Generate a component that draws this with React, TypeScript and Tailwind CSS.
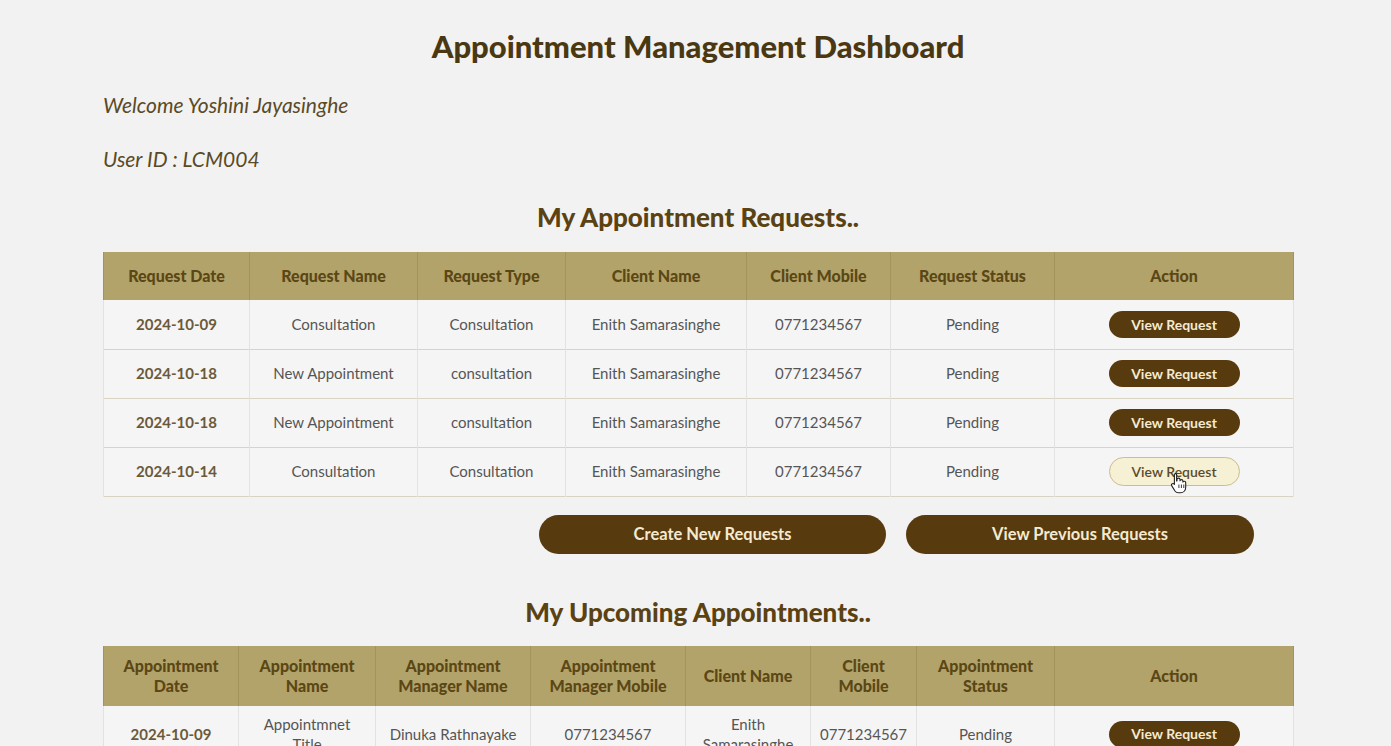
import { Fragment } from "react";

const requestRows = [
  { date: "2024-10-09", name: "Consultation", type: "Consultation" },
  { date: "2024-10-18", name: "New Appointment", type: "consultation" },
  { date: "2024-10-18", name: "New Appointment", type: "consultation" },
  { date: "2024-10-14", name: "Consultation", type: "Consultation", hover: true },
];

const requestCols = [
  { label: "Request Date", w: "w-[146px]" },
  { label: "Request Name", w: "w-[168px]" },
  { label: "Request Type", w: "w-[148px]" },
  { label: "Client Name", w: "w-[181px]" },
  { label: "Client Mobile", w: "w-[144px]" },
  { label: "Request Status", w: "w-[164px]" },
  { label: "Action", w: "w-[239px]" },
];

const apptCols = [
  { label: ["Appointment", "Date"], w: "w-[135px]" },
  { label: ["Appointment", "Name"], w: "w-[137px]" },
  { label: ["Appointment", "Manager Name"], w: "w-[155px]" },
  { label: ["Appointment", "Manager Mobile"], w: "w-[155px]" },
  { label: ["Client Name"], w: "w-[125px]" },
  { label: ["Client", "Mobile"], w: "w-[106px]" },
  { label: ["Appointment", "Status"], w: "w-[138px]" },
  { label: ["Action"], w: "w-[239px]" },
];

const HandCursor = () => (
  <svg width="18" height="22" viewBox="0 0 18 22" className="absolute left-[60px] top-[14px]">
    <path
      d="M5 1.5c1 0 1.6.7 1.6 1.6V9l.4-.1V7.6c0-.9.7-1.5 1.5-1.5s1.5.6 1.5 1.5v1.2c.2-.8.8-1.2 1.5-1.2.8 0 1.4.6 1.4 1.4v1.1c.3-.6.8-.9 1.4-.9.8 0 1.4.6 1.4 1.4v4.6c0 3.2-2.2 5.6-5.3 5.6H8.5c-1.6 0-2.6-.6-3.5-1.8L1.8 13.9c-.6-.8-.4-1.8.4-2.2.7-.4 1.5-.2 2 .4l.2.3V3.1c0-.9.7-1.6 1.6-1.6z"
      fill="#fff"
      stroke="#222"
      strokeWidth="1.1"
      strokeLinejoin="round"
    />
    <path d="M8.9 12.5v3.5M11.4 12.5v3.5M13.8 12.5v3.5" stroke="#222" strokeWidth="0.9" />
  </svg>
);

const ViewButton = ({ hover = false }: { hover?: boolean }) =>
  hover ? (
    <span className="relative inline-flex h-[29px] w-[131px] items-center justify-center rounded-full border border-[#cbbd8e] bg-[#f6f0d4] text-[14px] font-semibold text-[#5b4c2c]">
      View Request
      <HandCursor />
    </span>
  ) : (
    <span className="inline-flex h-[27px] w-[131px] items-center justify-center rounded-full bg-[#573a0e] text-[14px] font-bold text-[#f5ead0]">
      View Request
    </span>
  );

export default function App() {
  return (
    <div
      className="min-h-[746px] w-full bg-[#f2f2f2] text-[#555]"
      style={{ fontFamily: "Lato, 'Open Sans', sans-serif" }}
    >
      <div className="ml-[103px] flex w-[1190px] flex-col pt-[27px]">
        <h1 className="text-center text-[31px] font-black leading-[38px] text-[#4a3812]">
          Appointment Management Dashboard
        </h1>

        <p className="mt-[26px] text-[21px] italic leading-[28px] text-[#5b4a26]">Welcome Yoshini Jayasinghe</p>
        <p className="mt-[26px] text-[21px] italic leading-[28px] text-[#5b4a26]">User ID : LCM004</p>

        <h2 className="mt-[27px] text-center text-[26px] font-black leading-[34px] text-[#5b4212]">
          My Appointment Requests..
        </h2>

        <table className="mt-[18px] w-full table-fixed border-collapse">
          <thead>
            <tr className="h-[48px] bg-[#b2a36a]">
              {requestCols.map((c) => (
                <th
                  key={c.label}
                  className={`${c.w} border-x border-[#a3945c] text-center text-[16px] font-black text-[#5b4715]`}
                >
                  {c.label}
                </th>
              ))}
            </tr>
          </thead>
          <tbody>
            {requestRows.map((r, i) => (
              <tr key={i} className="h-[49px] border-b border-[#d9d4c2] bg-[#f5f5f5] text-center text-[15px]">
                <td className="border-x border-[#e2e2e2] font-bold text-[#6b5a3a]">{r.date}</td>
                <td className="border-x border-[#e2e2e2]">{r.name}</td>
                <td className="border-x border-[#e2e2e2]">{r.type}</td>
                <td className="border-x border-[#e2e2e2]">Enith Samarasinghe</td>
                <td className="border-x border-[#e2e2e2]">0771234567</td>
                <td className="border-x border-[#e2e2e2]">Pending</td>
                <td className="border-x border-[#e2e2e2]">
                  <ViewButton hover={r.hover} />
                </td>
              </tr>
            ))}
          </tbody>
        </table>

        <div className="mt-[18px] flex justify-end gap-[20px] pr-[39px]">
          <button className="h-[39px] w-[347px] rounded-full bg-[#573a0e] text-[16.5px] font-bold text-[#f5ead0]">
            Create New Requests
          </button>
          <button className="h-[39px] w-[348px] rounded-full bg-[#573a0e] text-[16.5px] font-bold text-[#f5ead0]">
            View Previous Requests
          </button>
        </div>

        <h2 className="mt-[41px] text-center text-[26px] font-black leading-[34px] text-[#5b4212]">
          My Upcoming Appointments..
        </h2>

        <table className="mt-[17px] w-full table-fixed border-collapse">
          <thead>
            <tr className="h-[60px] bg-[#b2a36a]">
              {apptCols.map((c) => (
                <th
                  key={c.label.join(" ")}
                  className={`${c.w} border-x border-[#a3945c] text-center text-[16px] font-black leading-[20px] text-[#5b4715]`}
                >
                  {c.label.map((l, j) => (
                    <Fragment key={j}>
                      {j > 0 && <br />}
                      {l}
                    </Fragment>
                  ))}
                </th>
              ))}
            </tr>
          </thead>
          <tbody>
            <tr className="h-[58px] border-b border-[#d9d4c2] bg-[#f5f5f5] text-center text-[15px] leading-[20px]">
              <td className="border-x border-[#e2e2e2] font-bold text-[#6b5a3a]">2024-10-09</td>
              <td className="border-x border-[#e2e2e2]">
                Appointmnet
                <br />
                Title
              </td>
              <td className="border-x border-[#e2e2e2]">Dinuka Rathnayake</td>
              <td className="border-x border-[#e2e2e2]">0771234567</td>
              <td className="border-x border-[#e2e2e2]">
                Enith
                <br />
                Samarasinghe
              </td>
              <td className="border-x border-[#e2e2e2]">0771234567</td>
              <td className="border-x border-[#e2e2e2]">Pending</td>
              <td className="border-x border-[#e2e2e2]">
                <ViewButton />
              </td>
            </tr>
          </tbody>
        </table>
      </div>
    </div>
  );
}
